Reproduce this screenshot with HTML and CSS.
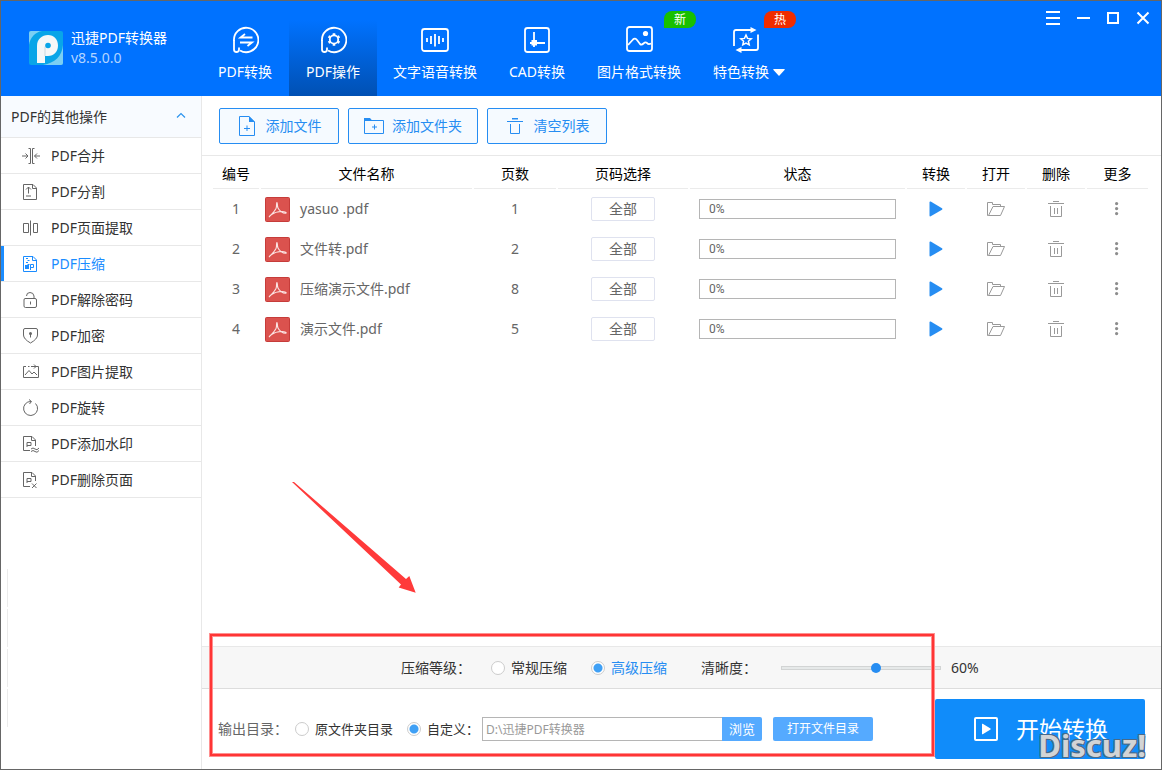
FILE: index.html
```html
<!DOCTYPE html>
<html lang="zh-CN">
<head>
<meta charset="utf-8">
<meta name="viewport" content="width=device-width, initial-scale=1">
<title>迅捷PDF转换器</title>
<link rel="stylesheet" href="styles.css">
</head>
<body>
<svg class="symbols" aria-hidden="true">
  <symbol id="pdf" viewBox="0 0 25 25">
    <rect x=".5" y=".5" width="24" height="24" rx="1" fill="#db524e" stroke="#c63c3a"/>
    <path d="M4.500 19.500C6 17.500 9.500 15 11 11.500C12 9 11.200 5.500 11.900 5.500C12.700 5.500 12 9 13 11C14.500 14 18 16.500 20.500 16.300C22.500 16 20 14.300 16.500 14.500C12 14.700 9 15.700 6.500 17.500C4.500 19 3.800 20.500 4.500 19.500Z" fill="none" stroke="#fbe3e2" stroke-width="1.100"/>
  </symbol>
  <symbol id="play" viewBox="0 0 15 16"><path d="M.500 1.500Q.5 .3 1.700 .6L13 7.200Q14 8 13 8.700L1.700 15.300Q.5 15.700 .5 14.500Z" fill="#268df2"/></symbol>
  <symbol id="folder" viewBox="0 0 20 16">
    <path d="M2.500 14.500H1.500V1.500H6.500V3.500H14.500V5.500M2.500 14.500H14.500L18.500 5.500H7L2.500 14.500" fill="none" stroke="#999"/>
  </symbol>
  <symbol id="trash" viewBox="0 0 16 18">
    <path d="M5 1.500H11M0 3.500H16M2.500 6V16.500H13.500V6M6.500 8V14M9.500 8V14" fill="none" stroke="#999"/>
  </symbol>
  <symbol id="dots" viewBox="0 0 5 15"><g fill="#8c8c8c"><circle cx="1.600" cy="1.600" r="1.600"/><circle cx="1.600" cy="6.600" r="1.600"/><circle cx="1.600" cy="11.600" r="1.600"/></g></symbol>
</svg>
<div class="app">
  <header class="topbar">
    <div class="brand">
      <svg class="brand-logo" viewBox="0 0 34 34" aria-hidden="true">
        <rect width="34" height="34" rx="2" fill="#09a5e8"/>
        <path d="M0 14C1 7 6 1 13 0H2Q0 0 0 2Z" fill="#7bcff3"/>
        <path d="M34 14C33 25 26 32 14 34H32Q34 34 34 32Z" fill="#7bcff3"/>
        <path d="M8 32V15C8 8 13 4 19 4C25 4 29 8.500 29 14.500C29 20.500 25 25 19 25L16 25V32Z" fill="#f5f7f8"/>
        <path d="M16 25V15.500" fill="none" stroke="#c9d8df"/>
        <circle cx="19" cy="14.500" r="2.800" fill="#09a5e8"/>
      </svg>
      <div class="brand-text">
        <div class="brand-name">迅捷PDF转换器</div>
        <div class="brand-version">v8.5.0.0</div>
      </div>
    </div>
    <nav class="tabs">
      <button class="tab">
        <svg viewBox="0 0 28 28"><g fill="none" stroke="#fff" stroke-width="1.800"><path d="M3 15A12.200 12.200 0 1 1 9 24.500"/><path d="M3 14V23.500A2.500 2.500 0 0 0 8 23.500V21.500"/><path d="M21.500 11.500H9.500L14 8M9 16.500H21L16.500 20"/></g></svg>
        <span>PDF转换</span>
      </button>
      <button class="tab tab-active">
        <svg viewBox="0 0 28 28"><g fill="none" stroke="#fff" stroke-width="1.800"><path d="M3 15A12.200 12.200 0 1 1 9 24.500"/><path d="M3 14V23.500A2.500 2.500 0 0 0 8 23.500V21.500"/><circle cx="15" cy="13.500" r="4.200"/><path stroke-width="2.600" d="M15 7.200V9M15 18V19.800M9.500 10.300L11.100 11.200M18.900 15.800L20.500 16.700M9.500 16.700L11.100 15.800M18.900 11.200L20.500 10.300"/></g></svg>
        <span>PDF操作</span>
      </button>
      <button class="tab">
        <svg viewBox="0 0 28 28"><g fill="none" stroke="#fff" stroke-width="1.800"><rect x="1" y="3" width="26" height="22" rx="2.500"/><path d="M6 12V16M10 10V18M14 8V20.500M18 10V18M22 12V16"/></g></svg>
        <span>文字语音转换</span>
      </button>
      <button class="tab">
        <svg viewBox="0 0 28 28"><g fill="none" stroke="#fff" stroke-width="1.800"><rect x="2" y="2" width="24" height="24" rx="2.500"/><path d="M11 6V21M7 17H22"/></g><rect x="8.500" y="14" width="5.500" height="5.500" fill="#fff"/></svg>
        <span>CAD转换</span>
      </button>
      <button class="tab">
        <svg viewBox="0 0 28 28"><g fill="none" stroke="#fff" stroke-width="1.800"><rect x="2" y="1" width="25" height="24" rx="2.500"/><path d="M3 19L8 13.500Q10 11.500 12 14L15 18Q16.500 19.500 18.500 17.500Q20.500 15.500 22 17Q23.500 19 26 17.500"/></g><circle cx="20.500" cy="7.500" r="2.600" fill="#fff"/></svg>
        <span>图片格式转换</span>
        <span class="badge badge-new">新</span>
      </button>
      <button class="tab">
        <svg class="star-icon" viewBox="0 0 28 28"><g fill="none" stroke="#fff" stroke-width="1.800"><path d="M2 20V6Q2 4 4 4H19M26 8.500V22Q26 24 24 24H8.500"/><path stroke-width="1.500" d="M14 9L15.500 12.400L19.200 12.800L16.400 15.200L17.200 18.800L14 17L10.800 18.800L11.600 15.200L8.800 12.800L12.500 12.400Z"/></g><path d="M18.500 1L24.500 4L18.500 7ZM9.500 21L3.500 24L9.500 27Z" fill="#fff"/></svg>
        <span class="tab-more">特色转换<svg class="caret" viewBox="0 0 12 7"><path d="M.5 0H11.500Q12 .5 11.500 1L6.500 6.500Q6 7 5.500 6.500L.5 1Q0 .5 .5 0Z" fill="#fff"/></svg></span>
        <span class="badge badge-hot">热</span>
      </button>
    </nav>
    <div class="window-buttons">
      <button aria-label="菜单"><svg viewBox="0 0 14 14"><path d="M0 1H14M0 7H14M0 13H14"/></svg></button>
      <button aria-label="最小化"><svg viewBox="0 0 14 14"><path d="M1 7H14"/></svg></button>
      <button aria-label="最大化"><svg viewBox="0 0 14 14"><path d="M2 2H12V12H2Z"/></svg></button>
      <button aria-label="关闭"><svg viewBox="0 0 14 14"><path d="M1.500 1.500L12.500 12.500M12.500 1.500L1.500 12.500"/></svg></button>
    </div>
  </header>

  <div class="body">
    <aside class="sidebar">
      <button class="side-title">PDF的其他操作
        <svg class="chevron" viewBox="0 0 10 6"><path d="M1 5.500L5 1.500L9 5.500" fill="none" stroke="#2b93ee" stroke-width="1.200"/></svg>
      </button>
      <nav class="side-list">
        <a class="side-item" href="#"><svg viewBox="0 0 18 18"><path d="M6.500 1.500H8.500V16.500H6.500M12.500 1.500H10.500V16.500H12.500M0 9H5.500M3.500 6.500L6 9L3.500 11.500M18 9H12.500M15 6.500L12.500 9L15 11.500"/></svg>PDF合并</a>
        <a class="side-item" href="#"><svg viewBox="0 0 18 18"><path d="M1.500 1.500H11L14.500 5V16.500H1.500ZM10.500 1.500V5.500H14.500M6.500 10.500V4M4 6.500L6.500 4L9 6.500M4 13H9"/></svg>PDF分割</a>
        <a class="side-item" href="#"><svg viewBox="0 0 18 18"><path d="M1.500 4.500H6.500V13.500H1.500ZM11.500 4.500H15.500V13.500H11.500ZM8.500 1.500V16.500"/></svg>PDF页面提取</a>
        <a class="side-item side-item-active" href="#"><svg viewBox="0 0 18 18"><path d="M1.500 1.500H11L14.500 5V16.500H1.500ZM10.500 1.500V5.500H14.500M4 3.500H6M5.500 5.500H7.500M4 7.500H6M5.500 9.500H7.500M8.500 15V9.500H11.500V12.500H8.500"/><path class="solid" d="M3 10H7V14H3Z"/></svg>PDF压缩</a>
        <a class="side-item" href="#"><svg viewBox="0 0 18 18"><path d="M3 7.500H13Q14.500 7.500 14.500 9V15Q14.500 16.500 13 16.500H3.500Q2 16.500 2 15V9Q2 7.500 3 7.500ZM4.500 5Q4.500 1.500 8 1.500Q11.500 1.500 12 5V7.500M8.500 10.500V13.500"/></svg>PDF解除密码</a>
        <a class="side-item" href="#"><svg viewBox="0 0 18 18"><path d="M3 1.500H14Q15.500 1.500 15.500 3V8Q15.500 12 8.500 16Q1.500 12 1.500 8V3Q1.500 1.500 3 1.500ZM8.500 6V10.500"/><circle class="solid" cx="8.500" cy="6.500" r="1.500"/></svg>PDF加密</a>
        <a class="side-item" href="#"><svg viewBox="0 0 18 18"><path d="M4 3.500H1.500V14.500H16.500V3.500H14M6 3.500H7.500M9 3.500H14M12 1.500L14 3.500L12 5.500M3 12L7 7.500L10 11L12 9L15 12"/></svg>PDF图片提取</a>
        <a class="side-item" href="#"><svg viewBox="0 0 18 18"><path d="M9 2.500A7 7 0 1 0 13.500 4.500M7 .5L9.500 2.500L7.500 5"/></svg>PDF旋转</a>
        <a class="side-item" href="#"><svg viewBox="0 0 18 18"><path d="M8 15.500H1.500V1.500H10L13.500 5V11M9.500 1.500V5.500H13.500M5 12V7.500H9V10.500H5M9 14Q11 12 13 14T17 13M9 16.500Q11 14.500 13 16.500T17 15.500"/></svg>PDF添加水印</a>
        <a class="side-item" href="#"><svg viewBox="0 0 18 18"><path d="M8 15.500H1.500V1.500H10L13.500 5V10M9.500 1.500V5.500H13.500M5 12V7.500H9V10.500H5M10 12.500L14.500 17M14.500 12.500L10 17"/></svg>PDF删除页面</a>
      </nav>
      <div class="side-marks"></div>
    </aside>

    <main class="main">
      <div class="toolbar">
        <button class="tool"><svg viewBox="0 0 20 20"><path d="M2.500 .5H12L17.500 6V19.500H2.500ZM10 9.500V15M7 12.500H13"/><path class="solid" d="M12 0V6H18Z"/></svg>添加文件</button>
        <button class="tool tool-wide"><svg viewBox="0 0 20 20"><path d="M.5 4.500H19.500V17.500H.5ZM10.500 8.500V13.500M8 11H13"/><path class="solid" d="M0 2H6L8.500 5H0Z"/></svg>添加文件夹</button>
        <button class="tool"><svg viewBox="0 0 20 20"><path d="M2 5.500H18M5.500 8V17.500H14.500V8" /><path class="solid" d="M7 2H13V3.500H7Z"/></svg>清空列表</button>
      </div>

      <div class="files">
        <table class="file-table">
          <colgroup><col class="c-no"><col class="c-name"><col class="c-pages"><col class="c-range"><col><col class="c-act"><col class="c-act"><col class="c-act"><col class="c-more"></colgroup>
          <thead>
            <tr><th>编号</th><th>文件名称</th><th>页数</th><th>页码选择</th><th>状态</th><th>转换</th><th>打开</th><th>删除</th><th>更多</th></tr>
          </thead>
          <tbody>
            <tr>
              <td>1</td>
              <td><div class="file"><svg class="file-icon"><use href="#pdf"/></svg>yasuo .pdf</div></td>
              <td>1</td>
              <td><button class="range">全部</button></td>
              <td><div class="status" role="progressbar" aria-label="状态" aria-valuenow="0">0%</div></td>
              <td><button class="act" aria-label="转换"><svg class="i-play"><use href="#play"/></svg></button></td>
              <td><button class="act" aria-label="打开"><svg class="i-folder"><use href="#folder"/></svg></button></td>
              <td><button class="act" aria-label="删除"><svg class="i-trash"><use href="#trash"/></svg></button></td>
              <td><button class="act" aria-label="更多"><svg class="i-dots"><use href="#dots"/></svg></button></td>
            </tr>
            <tr>
              <td>2</td>
              <td><div class="file"><svg class="file-icon"><use href="#pdf"/></svg>文件转.pdf</div></td>
              <td>2</td>
              <td><button class="range">全部</button></td>
              <td><div class="status" role="progressbar" aria-label="状态" aria-valuenow="0">0%</div></td>
              <td><button class="act" aria-label="转换"><svg class="i-play"><use href="#play"/></svg></button></td>
              <td><button class="act" aria-label="打开"><svg class="i-folder"><use href="#folder"/></svg></button></td>
              <td><button class="act" aria-label="删除"><svg class="i-trash"><use href="#trash"/></svg></button></td>
              <td><button class="act" aria-label="更多"><svg class="i-dots"><use href="#dots"/></svg></button></td>
            </tr>
            <tr>
              <td>3</td>
              <td><div class="file"><svg class="file-icon"><use href="#pdf"/></svg>压缩演示文件.pdf</div></td>
              <td>8</td>
              <td><button class="range">全部</button></td>
              <td><div class="status" role="progressbar" aria-label="状态" aria-valuenow="0">0%</div></td>
              <td><button class="act" aria-label="转换"><svg class="i-play"><use href="#play"/></svg></button></td>
              <td><button class="act" aria-label="打开"><svg class="i-folder"><use href="#folder"/></svg></button></td>
              <td><button class="act" aria-label="删除"><svg class="i-trash"><use href="#trash"/></svg></button></td>
              <td><button class="act" aria-label="更多"><svg class="i-dots"><use href="#dots"/></svg></button></td>
            </tr>
            <tr>
              <td>4</td>
              <td><div class="file"><svg class="file-icon"><use href="#pdf"/></svg>演示文件.pdf</div></td>
              <td>5</td>
              <td><button class="range">全部</button></td>
              <td><div class="status" role="progressbar" aria-label="状态" aria-valuenow="0">0%</div></td>
              <td><button class="act" aria-label="转换"><svg class="i-play"><use href="#play"/></svg></button></td>
              <td><button class="act" aria-label="打开"><svg class="i-folder"><use href="#folder"/></svg></button></td>
              <td><button class="act" aria-label="删除"><svg class="i-trash"><use href="#trash"/></svg></button></td>
              <td><button class="act" aria-label="更多"><svg class="i-dots"><use href="#dots"/></svg></button></td>
            </tr>
          </tbody>
        </table>
      </div>

      <div class="bottom">
        <div class="options">
          <span class="options-label">压缩等级：</span>
          <label class="choice"><input type="radio" name="level">常规压缩</label>
          <label class="choice choice-on"><input type="radio" name="level" checked>高级压缩</label>
          <label class="clarity-label" for="clarity">清晰度：</label>
          <input class="clarity" id="clarity" type="range" min="0" max="100" value="60">
          <output for="clarity">60%</output>
        </div>
        <div class="output">
          <span class="output-label">输出目录：</span>
          <label class="choice choice-small"><input type="radio" name="dir">原文件夹目录</label>
          <label class="choice choice-small choice-custom"><input type="radio" name="dir" checked>自定义：</label>
          <input class="path" type="text" aria-label="输出目录" value="D:\迅捷PDF转换器">
          <button class="browse">浏览</button>
          <button class="open-dir">打开文件目录</button>
          <button class="start">
            <svg viewBox="0 0 24 24"><rect x="1" y="1" width="22" height="22" rx="1" fill="none" stroke="#fff" stroke-width="2"/><path d="M8 7Q8 6.500 8.700 6.800L16.500 11.500Q17 12 16.500 12.500L8.700 17.200Q8 17.500 8 17Z" fill="#fff"/></svg>开始转换
          </button>
        </div>
        <div class="highlight"></div>
        <svg class="arrow" viewBox="0 0 124 112" aria-hidden="true"><path d="M0 1L2 1L114 98L117.300 95L123.700 111.700L106.700 106.500L109 103.500Z" fill="#ff3a3a"/></svg>
        <div class="watermark">Discuz!</div>
      </div>
    </main>
  </div>
</div>
</body>
</html>
```
FILE: styles.css
```css
* { box-sizing: border-box; }

body {
  margin: 0;
  font: 14px/20px "Noto Sans", "Noto Sans CJK SC", sans-serif;
  color: #333;
}

button, input { font: inherit; color: inherit; }
button { border: 0; padding: 0; background: none; cursor: pointer; white-space: nowrap; }
svg { display: block; flex: none; }
.symbols { position: absolute; width: 0; height: 0; }

.app {
  display: flex;
  flex-direction: column;
  min-height: 100vh;
  border: 1px solid #666;
  background: #fff;
}

/* Top bar */
.topbar { display: flex; background: #0072ff; color: #fff; }
.brand { display: flex; align-items: center; gap: 8px; width: 200px; padding: 0 0 2px 28px; }
.brand-logo { width: 34px; height: 34px; }
.brand-version { color: #b3d5ff; }

.tabs { display: flex; flex: 1; }
.tab {
  position: relative;
  display: flex;
  flex-direction: column;
  align-items: center;
  gap: 8px;
  min-width: 88px;
  padding: 25px 16px 14px;
}
.tab svg { width: 28px; height: 28px; }
.tab .star-icon { margin-right: 6px; }
.tab-active { background: linear-gradient(#0072ff 20%, #0050b3); }
.tab-more { display: flex; align-items: center; gap: 4px; }
.tab .caret { width: 12px; height: 7px; }
.badge {
  position: absolute;
  top: 10px;
  width: 32px;
  border-radius: 8px 8px 8px 0;
  font-size: 12px;
  line-height: 17px;
}
.badge-new { right: 1px; background: #18c000; }
.badge-hot { right: 5px; background: #f02c00; }

.window-buttons { display: flex; margin-right: 3px; }
.window-buttons button { display: grid; place-items: center; width: 30px; height: 34px; }
.window-buttons svg { width: 14px; height: 14px; fill: none; stroke: #fff; stroke-width: 2; }

.body { display: flex; flex: 1; }

/* Sidebar */
.sidebar {
  display: flex;
  flex-direction: column;
  flex: none;
  width: 201px;
  border-right: 1px solid #e8e8e8;
}
.side-title {
  display: flex;
  align-items: center;
  justify-content: space-between;
  width: 100%;
  height: 42px;
  padding: 0 15px 0 10px;
  border-bottom: 1px solid #e8e8e8;
  background: #f8fbff;
}
.chevron { width: 10px; height: 6px; margin-bottom: 3px; }
.side-item {
  display: flex;
  align-items: center;
  gap: 11px;
  height: 36px;
  padding-left: 21px;
  border-bottom: 1px solid #e8e8e8;
  color: #333;
  text-decoration: none;
}
.side-item svg { width: 18px; height: 18px; fill: none; stroke: #666; }
.side-item .solid { fill: #666; stroke: none; }
.side-item-active { color: #1a8cff; box-shadow: inset 3px 0 #1a8cff; }
.side-item-active svg { stroke: #1a8cff; }
.side-item-active .solid { fill: #1a8cff; }
.side-marks {
  width: 1px;
  height: 158px;
  margin: auto 0 42px 6px;
  background: repeating-linear-gradient(#ebebeb 0 38px, #fff 38px 40px);
}

/* Main */
.main { display: flex; flex: 1; flex-direction: column; min-width: 0; }
.toolbar { display: flex; gap: 9px; padding: 12px 17px 11px; border-bottom: 1px solid #e8e8e8; }
.tool {
  display: flex;
  align-items: center;
  justify-content: center;
  gap: 9px;
  width: 120px;
  height: 36px;
  border: 1px solid #268df2;
  border-radius: 2px;
  background: #f5faff;
  color: #268df2;
}
.tool-wide { width: 130px; gap: 8px; }
.tool svg { width: 20px; height: 20px; fill: none; stroke: #268df2; }
.tool .solid { fill: #268df2; stroke: none; }

.files { flex: 1; padding: 0 11px 0 9px; }
.file-table { width: 100%; table-layout: fixed; border-collapse: separate; border-spacing: 2px 0; }
.c-no { width: 46px; }
.c-name { width: 211px; }
.c-pages { width: 82px; }
.c-range { width: 130px; }
.c-act { width: 58px; }
.c-more { width: 61px; }
th { height: 33px; padding: 3px 0 0; border-bottom: 1px solid #ebebeb; font-weight: 400; color: #000; }
td { height: 40px; padding: 0; text-align: center; color: #666; }
.file { display: flex; align-items: center; gap: 10px; padding-left: 4px; }
.file-icon { width: 25px; height: 25px; }
.range { width: 64px; height: 24px; border: 1px solid #dfe2ef; border-radius: 2px; background: #fff; }
.status {
  height: 20px;
  margin: 0 9px;
  padding-left: 9px;
  border: 1px solid #b5b5b5;
  font-family: "Liberation Sans Narrow", Roboto, sans-serif;
  font-size: 12px;
  line-height: 18px;
  text-align: left;
}
.act { display: block; margin: 0 auto; }
.i-play { width: 15px; height: 16px; }
.i-folder { width: 20px; height: 16px; }
.i-trash { width: 16px; height: 18px; }
.i-dots { width: 5px; height: 15px; }

/* Bottom panel */
.bottom { position: relative; }
.options {
  display: flex;
  align-items: center;
  height: 43px;
  padding-left: 199px;
  border-top: 1px solid #e8e8e8;
  border-bottom: 1px solid #ddd;
  background: #f7f7f7;
}
.options-label { width: 90px; }
.choice { display: flex; align-items: center; gap: 6px; margin-right: 24px; }
.choice-on { margin-right: 34px; color: #268df2; }
.choice input {
  appearance: none;
  width: 14px;
  height: 14px;
  margin: 0;
  border: 1px solid #ccc;
  border-radius: 50%;
  background: #fff;
}
.choice input:checked { background: radial-gradient(circle, #3fa0f5 4px, #fff 5px); }
.clarity-label { width: 80px; }
.clarity { appearance: none; width: 160px; height: 16px; margin: 0 10px 0 0; background: none; }
.clarity::-webkit-slider-runnable-track { height: 4px; border: 1px solid #d2d4d4; background: #e6e9e9; }
.clarity::-webkit-slider-thumb {
  appearance: none;
  width: 10px;
  height: 10px;
  margin-top: -4px;
  border-radius: 50%;
  background: #268df2;
}

.output { display: flex; align-items: center; height: 80px; padding: 0 16px; }
.output-label { width: 77px; color: #666; }
.choice-small { font-size: 13px; margin-right: 14px; }
.choice-custom { width: 75px; margin-right: 0; white-space: nowrap; }
.path {
  width: 240px;
  height: 24px;
  padding: 0 3px;
  border: 1px solid #b5b5b5;
  border-right: 0;
  border-radius: 0;
  background: #fff;
  color: #999;
  font-size: 12px;
}
.browse, .open-dir { height: 24px; background: #55aaff; color: #fff; }
.browse { width: 40px; border-radius: 0 2px 2px 0; font-size: 13px; }
.open-dir { width: 100px; margin-left: 11px; border-radius: 2px; font-size: 12px; }
.start {
  display: flex;
  align-items: center;
  gap: 18px;
  width: 210px;
  height: 60px;
  margin-left: auto;
  padding-left: 39px;
  border-radius: 2px;
  background: #108cfa;
  color: #fff;
  font-size: 23px;
}
.start svg { width: 24px; height: 24px; }

/* Overlays on the bottom panel */
.highlight {
  position: absolute;
  inset: -12px 227px 13px 8px;
  border: 2px solid #ff3535;
  box-shadow: 0 0 0 1px #ff9090, inset 0 0 0 1px #ff9090;
  pointer-events: none;
}
.arrow { position: absolute; left: 90px; top: -165px; width: 124px; height: 112px; pointer-events: none; }
.watermark {
  position: absolute;
  right: 15px;
  bottom: 8px;
  color: #d2d4d6;
  font-size: 31px;
  font-weight: 700;
  line-height: 32px;
  text-shadow: -1px -1px #4a6a88, 1px -1px #4a6a88, -1px 1px #4a6a88, 1px 1px #4a6a88;
  pointer-events: none;
}
```
